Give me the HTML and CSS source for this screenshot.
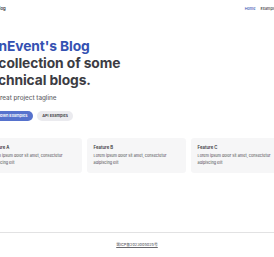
FILE: index.html
```html
<!DOCTYPE html>
<html lang="en">
  <head>
    <meta charset="UTF-8" />
    <meta name="viewport" content="width=device-width, initial-scale=1.0" />
    <title>OnEvent's Blog</title>
    <link rel="stylesheet" href="styles.css">
  </head>
  <body>
    <header class="nav">
      <a class="nav-title" href="#">OnEvent's Blog</a>
      <nav class="nav-links">
        <a class="active" href="#">Home</a>
        <a href="#">Examples</a>
      </nav>
    </header>

    <main class="home">
      <!-- Hero -->
      <section class="hero container">
        <h1 class="heading">
          <span class="name">OnEvent's Blog</span>
          <span class="text">A collection of some technical blogs.</span>
        </h1>
        <p class="tagline">My great project tagline</p>
        <div class="actions">
          <a class="btn brand" href="#">Markdown Examples</a>
          <a class="btn alt" href="#">API Examples</a>
        </div>
      </section>

      <!-- Features -->
      <section class="features container">
        <div class="feature">
          <h2 class="feature-title">Feature A</h2>
          <p class="feature-details">Lorem ipsum dolor sit amet, consectetur adipiscing elit</p>
        </div>
        <div class="feature">
          <h2 class="feature-title">Feature B</h2>
          <p class="feature-details">Lorem ipsum dolor sit amet, consectetur adipiscing elit</p>
        </div>
        <div class="feature">
          <h2 class="feature-title">Feature C</h2>
          <p class="feature-details">Lorem ipsum dolor sit amet, consectetur adipiscing elit</p>
        </div>
      </section>
    </main>

    <footer class="footer">
      <p class="copyright"><a href="#">蜀ICP备2023005025号</a></p>
    </footer>
  </body>
</html>
```

FILE: styles.css
```css
/* Page */
html,
body {
  overflow: hidden;
}

body {
  display: flex;
  flex-direction: column;
  height: 257px;
  margin: 0;
  background: #fff;
  color: #3c3c43;
  font-family: Inter, "Noto Sans", sans-serif;
}

a {
  color: inherit;
  text-decoration: none;
}

/* Nav bar */
.nav {
  display: flex;
  align-items: center;
  justify-content: space-between;
  height: 16px;
  margin: 0 -4px 0 -26px;
}

.nav-title {
  font-size: 4.3px;
  font-weight: 600;
}

.nav-links {
  display: flex;
  gap: 5px;
  font-size: 3.8px;
  font-weight: 500;
}

.nav-links .active {
  color: #3451b2;
}

/* Shared container, wider than the window */
.container {
  width: 312px;
  margin-left: -17px;
}

.home {
  flex-grow: 1;
}

/* Hero */
.hero {
  padding: 22px 0 17px;
}

.heading {
  margin: 0;
  padding-left: 2px;
  font-size: 13.8px;
  line-height: 17px;
  font-weight: 700;
  letter-spacing: -0.1px;
}

.heading .name,
.heading .text {
  display: block;
  max-width: 150px;
}

.heading .name {
  padding-left: 3px;
  color: #3451b2;
}

.tagline {
  margin: 5px 0 0;
  padding-left: 2px;
  font-size: 6.3px;
  line-height: 9.7px;
  font-weight: 500;
  color: #67676c;
}

.actions {
  display: flex;
  gap: 4px;
  margin-top: 7px;
}

.btn {
  height: 10.3px;
  padding: 0 5.4px;
  border-radius: 5.4px;
  font-size: 3.9px;
  line-height: 10.3px;
  font-weight: 600;
}

.btn.brand {
  background: #5672cd;
  color: #fff;
}

.btn.alt {
  background: #ebebef;
  color: #3c3c43;
}

/* Features */
.features {
  display: flex;
  gap: 5px;
}

.feature {
  flex: 0 0 99px;
  box-sizing: border-box;
  padding: 6.5px;
  border-radius: 3.2px;
  background: #f6f6f7;
}

.feature-title {
  margin: 0;
  font-size: 4.3px;
  line-height: 6.5px;
  font-weight: 600;
}

.feature-details {
  margin: 0;
  padding-top: 2.2px;
  font-size: 3.8px;
  line-height: 6.5px;
  font-weight: 500;
  color: #67676c;
}

/* Footer */
.footer {
  border-top: 1px solid #e2e2e3;
  padding: 8.6px 6px;
  text-align: center;
}

.copyright {
  margin: 0;
  font-family: Inter, "Noto Sans CJK SC", sans-serif;
  font-size: 3.8px;
  line-height: 6.5px;
  font-weight: 500;
  color: #67676c;
}

.copyright a {
  text-decoration: underline;
  text-underline-offset: 0.6px;
}
```
